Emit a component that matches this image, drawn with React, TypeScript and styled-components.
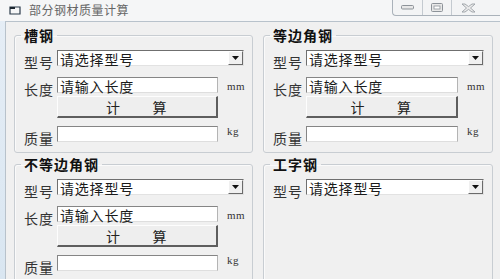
import styled, { createGlobalStyle } from 'styled-components';

const GlobalStyle = createGlobalStyle`
  html, body {
    margin: 0;
    padding: 0;
  }
  body {
    background: #dfe9f2;
    font-family: "Noto Sans CJK SC", "Liberation Sans", sans-serif;
  }
`;

interface GroupInfo {
  title: string;
  full: boolean;
}

const groups: GroupInfo[] = [
  { title: '槽钢', full: true },
  { title: '等边角钢', full: true },
  { title: '不等边角钢', full: true },
  { title: '工字钢', full: false },
];

function AppIcon() {
  return (
    <svg width='12' height='9' viewBox='0 0 12 9'>
      <path d='M1 1h10v7H1z' fill='none' stroke='#2b3a4a' strokeWidth='1.2' />
      <path d='M1 1h5v2H1z' fill='#1c2630' />
    </svg>
  );
}

function WindowControls() {
  return (
    <Controls>
      <CtrlButton $w={30}>
        <svg width='13' height='5' viewBox='0 0 13 5'>
          <rect x='0.5' y='0.5' width='12' height='3.5' rx='1' fill='#e8e8e8' stroke='#8d9399' />
        </svg>
      </CtrlButton>
      <CtrlButton $w={29}>
        <svg width='12' height='9' viewBox='0 0 12 9'>
          <rect x='0.5' y='0.5' width='11' height='8' rx='1' fill='#e8e8e8' stroke='#8d9399' />
          <rect x='3' y='3' width='6' height='3' fill='#fff' stroke='#8d9399' strokeWidth='0.8' />
        </svg>
      </CtrlButton>
      <CtrlButton $w={48} $last>
        <svg width='15' height='10' viewBox='0 0 15 10'>
          <path
            d='M1 1h3l3.5 2.6L11 1h3l-4.5 4L14 9h-3L7.5 6.4 4 9H1l4.5-4z'
            fill='#ececec'
            stroke='#9a9fa5'
            strokeWidth='0.9'
            strokeLinejoin='round'
          />
        </svg>
      </CtrlButton>
    </Controls>
  );
}

function Select() {
  return (
    <SelectBox>
      <FieldText>请选择型号</FieldText>
      <ArrowButton>
        <svg width='7' height='4' viewBox='0 0 7 4'>
          <path d='M0 0h7L3.5 4z' fill='#111' />
        </svg>
      </ArrowButton>
    </SelectBox>
  );
}

function Group({ title, full }: GroupInfo) {
  return (
    <GroupBox>
      <Legend>{title}</Legend>
      <Row>
        <Label>型号</Label>
        <SelectCell>
          <Select />
        </SelectCell>
      </Row>
      {full && (
        <>
          <Row $gap={11}>
            <Label>长度</Label>
            <Input>
              <FieldText>请输入长度</FieldText>
            </Input>
            <Unit $top={4}>mm</Unit>
          </Row>
          <Row $gap={3} $height={22}>
            <span />
            <CalcButton>计　　算</CalcButton>
          </Row>
          <Row $gap={8}>
            <Label>质量</Label>
            <Input />
            <Unit $top={0}>kg</Unit>
          </Row>
        </>
      )}
    </GroupBox>
  );
}

export default function App() {
  return (
    <>
      <GlobalStyle />
      <Frame>
        <TitleBar>
          <AppIcon />
          <Title>部分钢材质量计算</Title>
          <WindowControls />
        </TitleBar>
        <Client>
          {groups.map((g) => (
            <Group key={g.title} {...g} />
          ))}
        </Client>
      </Frame>
    </>
  );
}

const Frame = styled.div`
  width: 500px;
  height: 279px;
  overflow: hidden;
  display: flex;
  flex-direction: column;
  background: linear-gradient(180deg, #e6eef6 0%, #d9e6f1 100%);
`;

const TitleBar = styled.div`
  height: 21px;
  flex: none;
  display: flex;
  align-items: center;
  gap: 8px;
  padding-left: 9px;
  background: #f5f6f7;
`;

const Title = styled.span`
  font-size: 12px;
  line-height: 14px;
  letter-spacing: 0.5px;
  color: #666;
  margin-top: -2px;
`;

const Controls = styled.div`
  margin-left: auto;
  align-self: flex-start;
  height: 15px;
  display: flex;
  border-left: 1px solid #aab2ba;
  border-bottom: 1px solid #aab2ba;
  border-bottom-left-radius: 4px;
  background: #f3f4f5;
`;

const CtrlButton = styled.div<{ $w: number; $last?: boolean }>`
  width: ${({ $w }) => $w}px;
  display: flex;
  align-items: center;
  justify-content: ${({ $last }) => ($last ? 'flex-start' : 'center')};
  padding-left: ${({ $last }) => ($last ? '9px' : '0')};
  box-sizing: border-box;
  border-right: ${({ $last }) => ($last ? 'none' : '1px solid #c4cad0')};
`;

const Client = styled.div`
  flex: 1;
  margin-left: 5px;
  border-top: 1px solid #b8c2cb;
  border-left: 1px solid #b8c2cb;
  background: #f0f0f0;
  padding: 5px 0 0 8px;
  display: grid;
  grid-template-columns: 239px 230px;
  grid-template-rows: 126px 140px;
  column-gap: 10px;
  row-gap: 3px;
`;

const GroupBox = styled.fieldset`
  margin: 0;
  min-width: 0;
  padding: 7px 8px 10px 9px;
  border: 1px solid #c8cdd2;
  border-radius: 3px;
  box-shadow: inset 1px 1px 0 #fafafa;
  display: flex;
  flex-direction: column;
`;

const Legend = styled.legend`
  padding: 0 3px;
  margin-left: -3px;
  font-size: 14px;
  line-height: 16px;
  font-weight: bold;
  letter-spacing: 1px;
  color: #111;
`;

const Row = styled.div<{ $gap?: number; $height?: number }>`
  display: grid;
  grid-template-columns: 33px 1fr 26px;
  height: ${({ $height }) => $height ?? 16}px;
  margin-top: ${({ $gap }) => $gap ?? 0}px;
  align-items: start;
`;

const Label = styled.span`
  font-size: 14px;
  line-height: 16px;
  letter-spacing: 1px;
  padding-top: 4px;
  color: #333;
  white-space: nowrap;
`;

const SelectCell = styled.div`
  grid-column: 2 / 4;
`;

const SelectBox = styled.div`
  height: 16px;
  box-sizing: border-box;
  display: flex;
  align-items: center;
  background: #fff;
  border: 1px solid;
  border-color: #6f6f6f #e2e2e2 #e2e2e2 #6f6f6f;
  padding-left: 2px;
`;

const FieldText = styled.span`
  flex: 1;
  font-size: 14px;
  line-height: 14px;
  letter-spacing: 0.8px;
  color: #1a1a1a;
  white-space: nowrap;
  padding-top: 1px;
`;

const ArrowButton = styled.div`
  width: 15px;
  height: 14px;
  box-sizing: border-box;
  display: flex;
  align-items: center;
  justify-content: center;
  background: #f0f0f0;
  border: 1px solid;
  border-color: #fff #6a6a6a #6a6a6a #fff;
`;

const Input = styled.div`
  height: 16px;
  box-sizing: border-box;
  display: flex;
  align-items: center;
  padding-left: 2px;
  background: #fff;
  border: 1px solid;
  border-color: #858585 #b4b4b4 #dedede #858585;
`;

const Unit = styled.span<{ $top: number }>`
  font-family: "Liberation Serif", serif;
  font-size: 11px;
  line-height: 11px;
  letter-spacing: 0.5px;
  color: #333;
  padding: ${({ $top }) => $top}px 0 0 9px;
`;

const CalcButton = styled.div`
  height: 22px;
  box-sizing: border-box;
  display: flex;
  align-items: center;
  justify-content: center;
  background: #eeeeee;
  border-style: solid;
  border-width: 1px 2px 2px 1px;
  border-color: #fdfdfd #5e5e5e #5e5e5e #fdfdfd;
  font-size: 14px;
  letter-spacing: 1.5px;
  color: #222;
`;
